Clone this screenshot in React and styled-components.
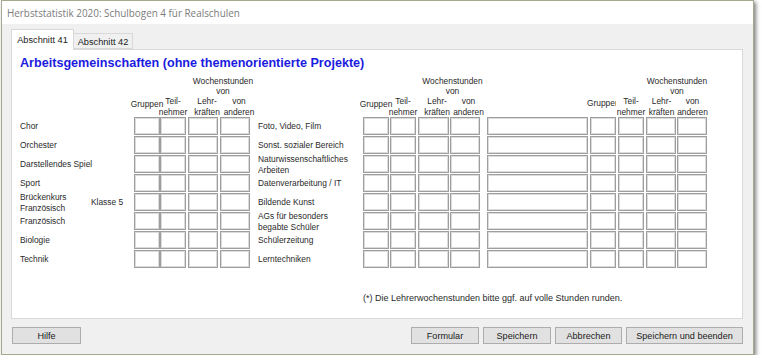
import React from "react";
import styled, { createGlobalStyle } from "styled-components";

const Global = createGlobalStyle`
  html, body { margin: 0; padding: 0; background: #ffffff; }
  body { font-family: "Liberation Sans", Arial, sans-serif; }
`;

const Window = styled.div`
  margin-left: 1px;
  width: 753px;
  height: 355px;
  box-sizing: border-box;
  border: 1px solid #a8a890;
  background: #f0f0f0;
  box-shadow: 2px 2px 4px rgba(0, 0, 0, 0.5);
  display: flex;
  flex-direction: column;
`;

const TitleBar = styled.div`
  height: 23px;
  background: #ffffff;
  display: flex;
  align-items: center;
  padding-left: 5px;
  font-family: "Open Sans", "Noto Sans", sans-serif;
  font-size: 9.9px;
  color: #7c7c7c;
`;

const Body = styled.div`
  padding: 5px 10px 0 9px;
  display: flex;
  flex-direction: column;
`;

const TabStrip = styled.div`
  display: flex;
  align-items: flex-end;
  height: 20px;
  position: relative;
  z-index: 1;
`;

const Tab = styled.div`
  box-sizing: border-box;
  height: ${p => (p.$active ? "21px" : "16px")};
  width: ${p => (p.$active ? "63px" : "60px")};
  margin-bottom: ${p => (p.$active ? "-1px" : "0")};
  border: 1px solid #d9d9d9;
  border-bottom: ${p => (p.$active ? "none" : "1px solid #d9d9d9")};
  background: ${p => (p.$active ? "#ffffff" : "#f0f0f0")};
  font-size: 9.2px;
  color: #1a1a1a;
  display: flex;
  align-items: center;
  justify-content: center;
  padding-top: ${p => (p.$active ? "0" : "1px")};
  margin-left: ${p => (p.$active ? "0" : "-1px")};
`;

const Panel = styled.div`
  box-sizing: border-box;
  height: 270px;
  background: #ffffff;
  border: 1px solid #d9d9d9;
  padding: 6px 0 0 8px;
`;

const Heading = styled.div`
  font-size: 12.6px;
  font-weight: bold;
  line-height: 15px;
  color: #1b1be0;
  margin-bottom: 4px;
`;

const Table = styled.div`
  display: grid;
  grid-template-columns: 71px 43px 26px 28px 32px 38px 105px 27px 28px 32px 37px 103px 28px 28px 31px 31px;
  grid-template-rows: 42px repeat(8, 19px);
  font-size: 8.4px;
  color: #2a2a2a;
`;

const Label = styled.div`
  grid-column: span ${p => p.$span || 1};
  align-self: center;
  line-height: 11px;
  white-space: nowrap;
`;

const Box = styled.div`
  box-sizing: border-box;
  width: ${p => p.$w}px;
  height: 18px;
  align-self: start;
  background: #ffffff;
  border: 1px solid #9e9e9e;
  box-shadow: inset 0 0 0 1px #dcdcdc;
`;

const HeadCell = styled.div`
  grid-column: span ${p => p.$span || 1};
  align-self: end;
  display: flex;
  flex-direction: column;
  line-height: 10.3px;
  padding-bottom: ${p => p.$pb || 0}px;
  width: ${p => p.$w}px;
  white-space: nowrap;
  margin-left: ${p => p.$ml || 0}px;
  overflow: ${p => (p.$clip ? "hidden" : "visible")};
  align-items: ${p => (p.$clip ? "flex-start" : "center")};
`;

const WochenPair = styled.div`
  display: flex;
  gap: ${p => p.$gap}px;
`;

const WochenCol = styled.div`
  width: ${p => p.$w}px;
  display: flex;
  flex-direction: column;
  align-items: center;
`;

const Note = styled.div`
  grid-column: 8 / -1;
  grid-row: 10;
  font-size: 9px;
  color: #2a2a2a;
  margin-top: 24px;
  white-space: nowrap;
`;

const Footer = styled.div`
  display: flex;
  justify-content: space-between;
  margin-top: 8px;
  padding-left: 1px;
`;

const ButtonGroup = styled.div`
  display: flex;
  gap: 4px;
`;

const Button = styled.div`
  box-sizing: border-box;
  width: ${p => p.$w}px;
  height: 17px;
  background: #e1e1e1;
  border: 1px solid #adadad;
  font-size: 9.1px;
  color: #1a1a1a;
  display: flex;
  align-items: center;
  justify-content: center;
`;

const leftRows = [
  { label: "Chor" },
  { label: "Orchester" },
  { label: "Darstellendes Spiel" },
  { label: "Sport" },
  { label: ["Brückenkurs", "Französisch"], klasse: "Klasse 5" },
  { label: "Französisch" },
  { label: "Biologie" },
  { label: "Technik" },
];

const midRows = [
  "Foto, Video, Film",
  "Sonst. sozialer Bereich",
  ["Naturwissenschaftliches", "Arbeiten"],
  "Datenverarbeitung / IT",
  "Bildende Kunst",
  ["AGs für besonders", "begabte Schüler"],
  "Schülerzeitung",
  "Lerntechniken",
];

const Lines = ({ text }) =>
  Array.isArray(text) ? text.map((t, i) => <div key={i}>{t}</div>) : text;

const Header = ({ gw, lw, aw, gap, clip }) => (
  <>
    <HeadCell
      $w={clip ? 29 : gw}
      $pb={clip ? 9 : 8}
      $ml={clip ? -3 : 0}
      $clip={clip}
    >
      Gruppen
    </HeadCell>
    <HeadCell $w={26}>
      <div>Teil-</div>
      <div>nehmer</div>
    </HeadCell>
    <HeadCell $span={2}>
      <WochenCol $w={lw + gap + aw}>
        <div>Wochenstunden</div>
        <div>von</div>
        <WochenPair $gap={gap}>
          <WochenCol $w={lw}>
            <div>Lehr-</div>
            <div>kräften</div>
          </WochenCol>
          <WochenCol $w={aw}>
            <div>von</div>
            <div>anderen</div>
          </WochenCol>
        </WochenPair>
      </WochenCol>
    </HeadCell>
  </>
);

export default function App() {
  return (
    <>
      <Global />
      <Window>
        <TitleBar>Herbststatistik 2020: Schulbogen 4 für Realschulen</TitleBar>
        <Body>
          <TabStrip>
            <Tab $active>Abschnitt 41</Tab>
            <Tab>Abschnitt 42</Tab>
          </TabStrip>
          <Panel>
            <Heading>Arbeitsgemeinschaften (ohne themenorientierte Projekte)</Heading>
            <Table>
              <div style={{ gridColumn: "span 2" }} />
              <Header gw={26} lw={30} aw={30} gap={2} />
              <div />
              <Header gw={26} lw={31} aw={30} gap={1} />
              <div />
              <Header gw={26} lw={30} aw={30} gap={1} clip />

              {leftRows.map((row, i) => (
                <React.Fragment key={i}>
                  {row.klasse ? (
                    <>
                      <Label>
                        <Lines text={row.label} />
                      </Label>
                      <Label>{row.klasse}</Label>
                    </>
                  ) : (
                    <Label $span={2}>
                      <Lines text={row.label} />
                    </Label>
                  )}
                  <Box $w={26} />
                  <Box $w={26} />
                  <Box $w={30} />
                  <Box $w={30} />
                  <Label>
                    <Lines text={midRows[i]} />
                  </Label>
                  <Box $w={26} />
                  <Box $w={26} />
                  <Box $w={31} />
                  <Box $w={30} />
                  <Box $w={101} />
                  <Box $w={26} />
                  <Box $w={26} />
                  <Box $w={30} />
                  <Box $w={30} />
                </React.Fragment>
              ))}
              <Note>(*) Die Lehrerwochenstunden bitte ggf. auf volle Stunden runden.</Note>
            </Table>
          </Panel>
          <Footer>
            <Button $w={69}>Hilfe</Button>
            <ButtonGroup>
              <Button $w={68}>Formular</Button>
              <Button $w={68}>Speichern</Button>
              <Button $w={67}>Abbrechen</Button>
              <Button $w={117}>Speichern und beenden</Button>
            </ButtonGroup>
          </Footer>
        </Body>
      </Window>
    </>
  );
}
